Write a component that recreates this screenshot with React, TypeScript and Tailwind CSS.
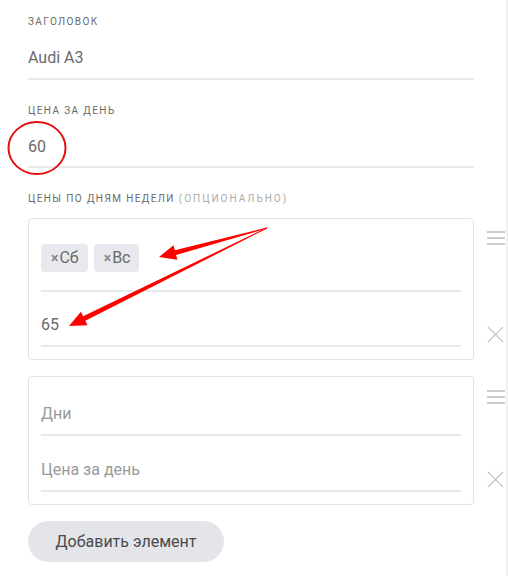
import React from "react";

type Pt = [number, number];

function arrowPoints(t: Pt, p: Pt, w0: number, w1: number, L: number, h: number) {
  const dx = p[0] - t[0];
  const dy = p[1] - t[1];
  const len = Math.hypot(dx, dy);
  const d: Pt = [dx / len, dy / len];
  const n: Pt = [-d[1], d[0]];
  const b: Pt = [p[0] - d[0] * L, p[1] - d[1] * L];
  const pts: Pt[] = [
    [t[0] + (n[0] * w0) / 2, t[1] + (n[1] * w0) / 2],
    [b[0] + (n[0] * w1) / 2, b[1] + (n[1] * w1) / 2],
    [b[0] + n[0] * h, b[1] + n[1] * h],
    p,
    [b[0] - n[0] * h, b[1] - n[1] * h],
    [b[0] - (n[0] * w1) / 2, b[1] - (n[1] * w1) / 2],
    [t[0] - (n[0] * w0) / 2, t[1] - (n[1] * w0) / 2],
  ];
  return pts.map((q) => `${q[0].toFixed(1)},${q[1].toFixed(1)}`).join(" ");
}

function Label({ children }: { children: React.ReactNode }) {
  return (
    <div className="h-[12px] text-[10px] leading-[12px] tracking-[0.14em] text-[#6a6a6a] uppercase">
      {children}
    </div>
  );
}

function Burger() {
  return (
    <div className="flex flex-col gap-[4px] w-[18px]">
      <div className="h-[2px] bg-[#cbcbd0]" />
      <div className="h-[2px] bg-[#cbcbd0]" />
      <div className="h-[2px] bg-[#cbcbd0]" />
    </div>
  );
}

function Cross() {
  return (
    <svg width="17" height="17" viewBox="0 0 17 17">
      <path d="M1 1 L16 16 M16 1 L1 16" stroke="#c4c4cc" strokeWidth="1.2" fill="none" />
    </svg>
  );
}

function Chip({ text }: { text: string }) {
  return (
    <div className="h-[28px] pl-[10px] pr-[9px] rounded-[4px] bg-[#e8e9ee] flex items-center text-[16px] text-[#6a6a6a]">
      <span className="text-[14px] text-[#8a8a8a] font-bold mr-[1px]">×</span>
      {text}
    </div>
  );
}

export default function App() {
  return (
    <div
      className="relative w-[508px] h-[576px] bg-white overflow-hidden"
      style={{ fontFamily: "Roboto, 'Noto Sans', sans-serif" }}
    >
      <div className="absolute right-0 top-0 w-[2px] h-full bg-[#f0f0f2]" />
      <div className="pl-[28px] pt-[16px] flex flex-col">
        <Label>Заголовок</Label>
        <div className="mt-[10px] w-[446px] h-[42px] border-b-2 border-[#e8e9ee] flex items-center text-[16px] text-[#6a6a6a]">
          Audi A3
        </div>
        <div className="mt-[25px]">
          <Label>Цена за день</Label>
        </div>
        <div className="mt-[10px] w-[446px] h-[41px] border-b-2 border-[#e8e9ee] flex items-center text-[16px] text-[#6a6a6a]">
          60
        </div>
        <div className="mt-[25px]">
          <Label>
            Цены по дням недели{" "}
            <span className="text-[#aaa] tracking-[0.2em]">(опционально)</span>
          </Label>
        </div>

        <div className="mt-[13px] flex">
          <div className="w-[446px] h-[142px] border border-[#e2e2e6] rounded-[4px] px-[12px] pt-[17px]">
            <div className="pt-[8px] pb-[18px] border-b-2 border-[#e8e9ee] flex gap-[6px]">
              <Chip text="Сб" />
              <Chip text="Вс" />
            </div>
            <div className="mt-[13px] h-[42px] border-b-2 border-[#e8e9ee] flex items-center text-[16px] text-[#6a6a6a]">
              65
            </div>
          </div>
          <div className="ml-[13px] flex flex-col justify-between pt-[13px] pb-[17px]">
            <Burger />
            <Cross />
          </div>
        </div>

        <div className="mt-[16px] flex">
          <div className="w-[446px] h-[129px] border border-[#e2e2e6] rounded-[4px] px-[12px] pt-[17px]">
            <div className="h-[42px] border-b-2 border-[#e8e9ee] flex items-center text-[16px] text-[#9a9a9a]">
              Дни
            </div>
            <div className="mt-[14px] h-[42px] border-b-2 border-[#e8e9ee] flex items-center text-[16px] text-[#9a9a9a]">
              Цена за день
            </div>
          </div>
          <div className="ml-[13px] flex flex-col justify-between pt-[14px] pb-[17px]">
            <Burger />
            <Cross />
          </div>
        </div>

        <div className="mt-[16px]">
          <button className="w-[196px] h-[41px] rounded-full bg-[#e3e5ea] text-[16px] text-[#4a4a4a]">
            Добавить элемент
          </button>
        </div>
      </div>

      <svg className="absolute left-0 top-0 pointer-events-none" width="508" height="576">
        <ellipse cx="37" cy="148" rx="28.5" ry="26" fill="none" stroke="#e01010" strokeWidth="2" />
        <polygon points={arrowPoints([267, 228], [159, 257], 1, 5, 17, 7.5)} fill="#f00" />
        <polygon points={arrowPoints([267, 228], [69, 326], 1, 5, 17, 7.5)} fill="#f00" />
      </svg>
    </div>
  );
}
